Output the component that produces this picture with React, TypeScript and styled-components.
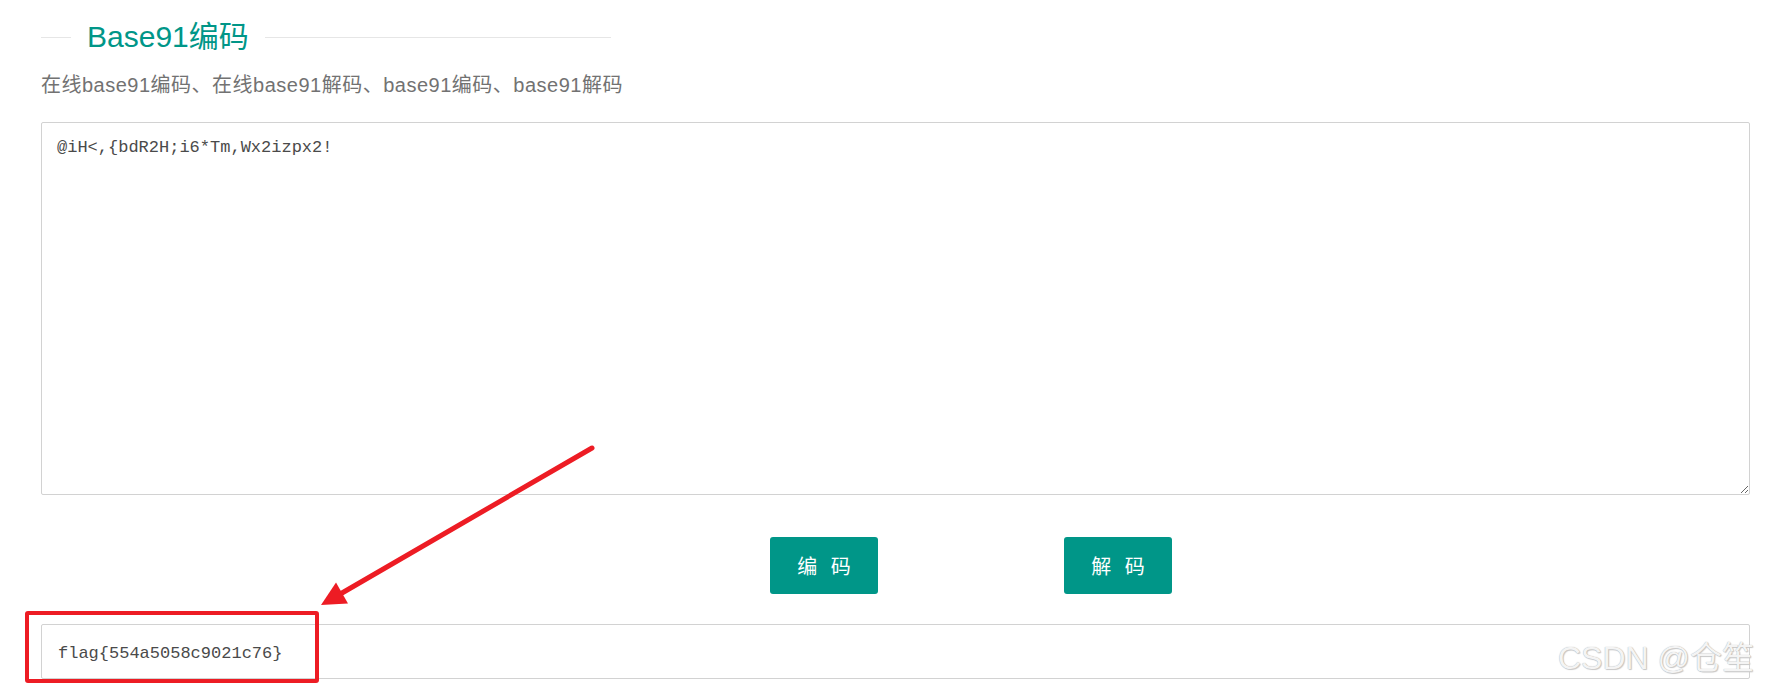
import styled, { createGlobalStyle } from 'styled-components'

const GlobalStyle = createGlobalStyle`
  html, body {
    margin: 0;
    padding: 0;
    background: #ffffff;
    overflow: hidden;
  }
  body {
    font-family: 'Liberation Sans', 'Noto Sans CJK SC', sans-serif;
  }
`

const App = () => {
  return (
    <Page>
      <GlobalStyle />
      <Panel>
        <Legend>
          <Rule width="30px" />
          <Title>Base91编码</Title>
          <Rule />
        </Legend>
        <Subtitle>在线base91编码、在线base91解码、base91编码、base91解码</Subtitle>
        <SourceArea defaultValue="@iH<,{bdR2H;i6*Tm,Wx2izpx2!" spellCheck={false} />
        <ButtonRow>
          <Button>编 码</Button>
          <Button>解 码</Button>
        </ButtonRow>
        <ResultInput defaultValue="flag{554a5058c9021c76}" spellCheck={false} />
      </Panel>

      <Highlight />
      <Arrow width="1769" height="693" viewBox="0 0 1769 693">
        <line x1="592" y1="448" x2="342" y2="593" stroke="#ed1c24" strokeWidth="5" strokeLinecap="round" />
        <polygon points="321,605 348,603.5 336,582.5" fill="#ed1c24" />
      </Arrow>
      <Watermark>CSDN @仓笙</Watermark>
    </Page>
  )
}

export default App

const Page = styled.div`
  position: relative;
  width: 1769px;
  height: 693px;
  overflow: hidden;
`

const Panel = styled.div`
  display: flex;
  flex-direction: column;
  width: 1709px;
  padding: 17px 0 0 41px;
`

const Legend = styled.div`
  display: flex;
  align-items: center;
  width: 570px;
  height: 40px;
`

const Rule = styled.span<{ width?: string }>`
  display: block;
  height: 1px;
  background: #e6e6e6;
  width: ${p => p.width || 'auto'};
  flex: ${p => (p.width ? 'none' : '1')};
`

const Title = styled.h2`
  margin: 0 16px;
  font-size: 30px;
  font-weight: normal;
  line-height: 40px;
  color: #009688;
  white-space: nowrap;
`

const Subtitle = styled.p`
  margin: 13px 0 0;
  font-size: 20px;
  line-height: 30px;
  letter-spacing: 0.5px;
  color: #727272;
  white-space: nowrap;
`

const mono = `'Liberation Mono', 'Noto Sans CJK SC', monospace`

const SourceArea = styled.textarea`
  box-sizing: border-box;
  margin-top: 22px;
  width: 100%;
  height: 373px;
  padding: 15px;
  border: 1px solid #d2d2d2;
  border-radius: 2px;
  font-family: ${mono};
  font-size: 17px;
  line-height: 20px;
  color: #4a4a4a;
  outline: none;
`

const ButtonRow = styled.div`
  display: flex;
  gap: 186px;
  margin-top: 42px;
  padding-left: 729px;
`

const Button = styled.button`
  width: 108px;
  height: 57px;
  padding: 0 0 0 4px;
  border: none;
  border-radius: 3px;
  background: #009688;
  color: #ffffff;
  font-family: 'Liberation Sans', 'Noto Sans CJK SC', sans-serif;
  font-size: 20px;
  letter-spacing: 4px;
  cursor: pointer;
`

const ResultInput = styled.input`
  box-sizing: border-box;
  margin-top: 30px;
  width: 100%;
  height: 55px;
  padding: 4px 16px 0;
  border: 1px solid #d2d2d2;
  border-radius: 2px;
  font-family: ${mono};
  font-size: 17px;
  color: #4a4a4a;
  outline: none;
`

const Highlight = styled.div`
  position: absolute;
  left: 25px;
  top: 611px;
  width: 294px;
  height: 72px;
  box-sizing: border-box;
  border: 4px solid #ed1c24;
  border-radius: 3px;
  pointer-events: none;
`

const Arrow = styled.svg`
  position: absolute;
  left: 0;
  top: 0;
  pointer-events: none;
`

const Watermark = styled.div`
  position: absolute;
  left: 1558px;
  top: 640px;
  font-family: 'Liberation Sans', 'Noto Sans CJK SC', sans-serif;
  font-size: 32px;
  line-height: 36px;
  white-space: nowrap;
  color: #f4f4f4;
  text-shadow: 0 0 1px #a0a0a0, 1px 1px 1px #cccccc;
  pointer-events: none;
`
